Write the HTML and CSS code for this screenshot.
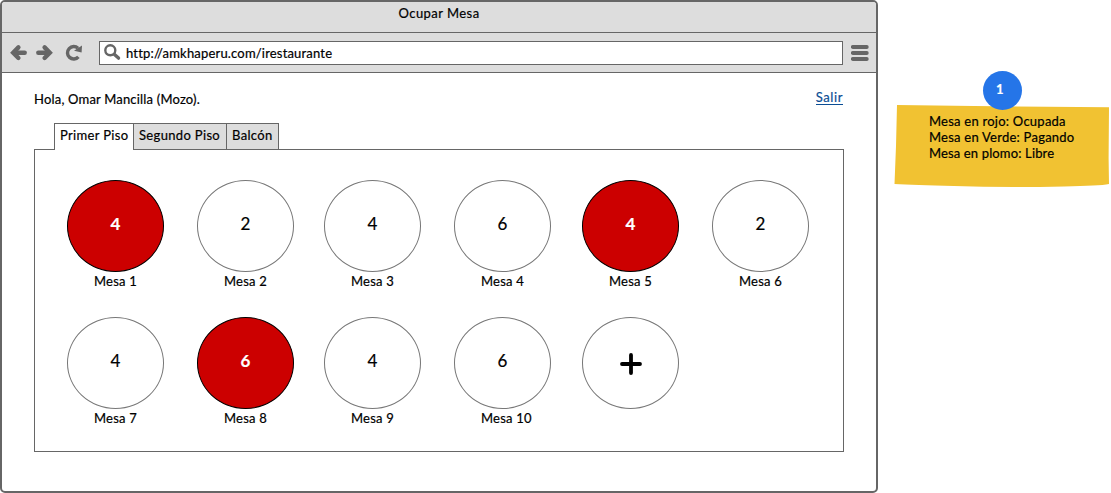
FILE: index.html
```html
<!DOCTYPE html>
<html lang="es">
<head>
<meta charset="utf-8">
<title>Ocupar Mesa</title>
<link rel="stylesheet" href="styles.css">
</head>
<body>
<div class="canvas">
  <main class="window">
    <header class="titlebar"><span class="t-title">Ocupar Mesa</span></header>
    <nav class="toolbar">
      <svg class="nav-icons" width="80" height="24" viewBox="0 0 80 24" fill="none" stroke="#666" stroke-width="4.4">
        <path d="M6.5 11.7H16.7" stroke-linecap="round"/><path d="M10.4 6.4L5.2 11.7L10.4 17" stroke-linecap="round"/>
        <path d="M30.3 11.7H40.5" stroke-linecap="round"/><path d="M36.6 6.4L41.8 11.7L36.6 17" stroke-linecap="round"/>
        <path d="M70.4 15.8A6.2 6.2 0 1 1 70 7.3" stroke-width="3.4"/><path d="M74 4.6L73.6 11.6L66 9.8Z" fill="#666" stroke="none"/>
      </svg>
      <div class="address">
        <svg width="18" height="18" viewBox="0 0 18 18" fill="none" stroke="#666"><circle cx="6.3" cy="6.3" r="5" stroke-width="2.4"/><path d="M10.5 10.5L14.5 14.1" stroke-width="3.4" stroke-linecap="round"/></svg>
        <span class="t-url">http://amkhaperu.com/irestaurante</span>
      </div>
      <svg class="menu-icon" width="18" height="18" viewBox="0 0 18 18" stroke="#666" stroke-width="3.8" stroke-linecap="round"><path d="M1.8 3H15.8M1.8 9H15.8M1.8 15H15.8"/></svg>
    </nav>
    <section class="content">
      <div class="user-row"><span class="t-user">Hola, Omar Mancilla (Mozo).</span><a class="logout">Salir</a></div>
      <div class="tabs">
        <div class="tab active">Primer Piso</div>
        <div class="tab second">Segundo Piso</div>
        <div class="tab third">Balcón</div>
      </div>
      <div class="panel">
        <div class="table"><div class="seat busy">4</div><span class="label">Mesa 1</span></div>
        <div class="table"><div class="seat">2</div><span class="label">Mesa 2</span></div>
        <div class="table"><div class="seat">4</div><span class="label">Mesa 3</span></div>
        <div class="table"><div class="seat">6</div><span class="label">Mesa 4</span></div>
        <div class="table"><div class="seat busy">4</div><span class="label">Mesa 5</span></div>
        <div class="table"><div class="seat">2</div><span class="label">Mesa 6</span></div>
        <div class="table"><div class="seat">4</div><span class="label">Mesa 7</span></div>
        <div class="table"><div class="seat busy">6</div><span class="label">Mesa 8</span></div>
        <div class="table"><div class="seat">4</div><span class="label">Mesa 9</span></div>
        <div class="table"><div class="seat">6</div><span class="label">Mesa 10</span></div>
        <div class="table"><div class="seat add"><svg width="22" height="22" viewBox="0 0 22 22" stroke="#000" stroke-width="3.8" stroke-linecap="round"><path d="M2 11H20M11 2V20"/></svg></div></div>
      </div>
    </section>
  </main>
  <aside class="note">
    <svg class="paper" width="217" height="84" viewBox="0 0 217 84"><path d="M3 1L80 2L215 3.3L214.6 54L215 80Q205 82 170 82.4Q110 83.6 60 82Q20 81.2 0.5 80L2 42Z" fill="#f1c232"/></svg>
    <div class="badge">1</div>
    <p>Mesa en rojo: Ocupada</p>
    <p>Mesa en Verde: Pagando</p>
    <p class="t-free">Mesa en plomo: Libre</p>
  </aside>
</div>
</body>
</html>
```
FILE: styles.css
```css
* { box-sizing: border-box; }
body {
  margin: 0;
  background: #fff;
  color: #000;
  font: 13px/16px Lato, "Open Sans", sans-serif;
  -webkit-text-stroke: 0.2px currentColor;
  overflow: hidden;
}
.canvas { display: flex; align-items: flex-start; width: 1111px; height: 493px; }
.window {
  flex: none;
  width: 878px;
  height: 493px;
  border: 2px solid #666;
  border-radius: 5px;
  overflow: hidden;
  white-space: nowrap;
}
.titlebar { height: 30px; padding-top: 3px; background: #ddd; text-align: center; letter-spacing: 0.45px; }
.toolbar {
  display: flex;
  align-items: center;
  height: 41px;
  padding: 0 7px 0 6px;
  border: 1px solid #666;
  border-width: 1px 0;
  background: #ddd;
}
.nav-icons { margin-right: 11px; }
.address {
  display: flex;
  align-items: center;
  width: 744px;
  height: 24px;
  padding-left: 4px;
  gap: 4px;
  border: 1px solid #666;
  background: #fff;
}
.t-url { letter-spacing: 0.18px; }
.menu-icon { margin-left: 8px; }
.content { padding: 17px 32px 0; }
.user-row { display: flex; justify-content: space-between; height: 33px; padding-top: 1px; }
.t-user { letter-spacing: 0.19px; }
.logout {
  height: 15px;
  margin: -1px 1px 0 0;
  border-bottom: 1px solid #0b4d94;
  color: #0b4d94;
  line-height: 14px;
  letter-spacing: 0.6px;
}
.tabs { display: flex; position: relative; height: 26px; padding-left: 20px; letter-spacing: 0.34px; }
.tab {
  height: 26px;
  padding: 3px 0 0 5px;
  border: 1px solid #666;
  border-bottom: 0;
  background: #ddd;
}
.active { width: 80px; height: 27px; background: #fff; }
.second { width: 93px; border-left: 0; }
.third { width: 52px; border-left: 0; }
.panel {
  display: grid;
  grid-template-columns: 130px 127px 130px 128px 130px 97px;
  grid-template-rows: 137px 137px;
  width: 810px;
  height: 303px;
  padding: 30px 0 0 32px;
  border: 1px solid #666;
}
.table { display: flex; flex-direction: column; }
.seat {
  display: flex;
  align-items: center;
  justify-content: center;
  width: 97px;
  height: 92px;
  padding-bottom: 4px;
  border: 1px solid #777;
  border-radius: 50%;
  font-size: 17px;
}
.busy { background: #c00; border-color: #000; color: #fff; font-weight: 700; }
.add { padding: 2px 0 0; }
.label { padding: 1px 0 0 27px; letter-spacing: 0.2px; }
.note {
  position: relative;
  width: 217px;
  margin: 104px 0 0 16px;
  padding: 9px 0 0 35px;
  letter-spacing: 0.24px;
  white-space: nowrap;
}
.note p { position: relative; margin: 0; }
.note .t-free { letter-spacing: 0.14px; }
.paper { position: absolute; left: 0; top: 0; }
.badge {
  position: absolute;
  left: 89px;
  top: -33px;
  width: 39px;
  height: 39px;
  padding-right: 5px;
  border-radius: 50%;
  background: #2575e8;
  color: #fff;
  font-weight: 700;
  line-height: 37px;
  text-align: center;
}
```
